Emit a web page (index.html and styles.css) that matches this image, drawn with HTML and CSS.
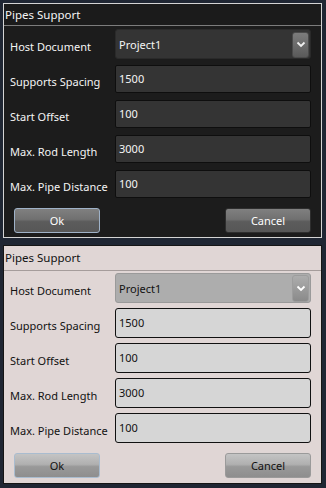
FILE: index.html
```html
<!DOCTYPE html>
<html>
<head>
<meta charset="utf-8">
<link rel="stylesheet" href="styles.css">
</head>
<body>
<div class="dialog dark">
  <div class="title">Pipes Support</div>
  <div class="form">
    <div class="row first">
      <div class="label">Host Document</div>
      <div class="combo">
        <span class="value">Project1</span>
        <span class="drop"><svg width="10" height="7" viewBox="0 0 10 7"><path d="M1.5 1.5 L5 5 L8.5 1.5" fill="none" stroke="currentColor" stroke-width="1.8"/></svg></span>
      </div>
    </div>
    <div class="row">
      <div class="label">Supports Spacing</div>
      <div class="box">1500</div>
    </div>
    <div class="row">
      <div class="label">Start Offset</div>
      <div class="box">100</div>
    </div>
    <div class="row">
      <div class="label">Max. Rod Length</div>
      <div class="box">3000</div>
    </div>
    <div class="row">
      <div class="label">Max. Pipe Distance</div>
      <div class="box">100</div>
    </div>
    <div class="buttons">
      <div class="btn ok">Ok</div>
      <div class="btn">Cancel</div>
    </div>
  </div>
</div>
<div class="dialog light">
  <div class="title">Pipes Support</div>
  <div class="form">
    <div class="row first">
      <div class="label">Host Document</div>
      <div class="combo">
        <span class="value">Project1</span>
        <span class="drop"><svg width="10" height="7" viewBox="0 0 10 7"><path d="M1.5 1.5 L5 5 L8.5 1.5" fill="none" stroke="currentColor" stroke-width="1.8"/></svg></span>
      </div>
    </div>
    <div class="row">
      <div class="label">Supports Spacing</div>
      <div class="box">1500</div>
    </div>
    <div class="row">
      <div class="label">Start Offset</div>
      <div class="box">100</div>
    </div>
    <div class="row">
      <div class="label">Max. Rod Length</div>
      <div class="box">3000</div>
    </div>
    <div class="row">
      <div class="label">Max. Pipe Distance</div>
      <div class="box">100</div>
    </div>
    <div class="buttons">
      <div class="btn ok">Ok</div>
      <div class="btn">Cancel</div>
    </div>
  </div>
</div>
</body>
</html>
```

FILE: styles.css
```css
html, body {
  margin: 0;
  padding: 0;
}
body {
  background: #1f2633;
  width: 326px;
  height: 488px;
  padding: 3px 4px 0 3px;
  box-sizing: border-box;
  display: flex;
  flex-direction: column;
  gap: 7px;
  font-family: "Noto Sans", "Open Sans", sans-serif;
  font-size: 11px;
}
.dialog {
  width: 319px;
  box-sizing: border-box;
  border: 1px solid #cfcfcf;
  display: flex;
  flex-direction: column;
}
.title {
  height: 21px;
  line-height: 21px;
  padding-left: 1px;
  font-size: 11.5px;
  border-bottom: 1px solid #7a7a7a;
}
.form {
  padding: 3px 10px 4px 6px;
  display: flex;
  flex-direction: column;
  gap: 7px;
}
.row {
  display: grid;
  grid-template-columns: 105px 1fr;
  align-items: center;
}
.row.first {
  margin-bottom: -1px;
}
.label {
  padding-top: 5px;
  white-space: nowrap;
}
.combo {
  height: 30px;
  box-sizing: border-box;
  border-radius: 3px;
  display: flex;
  align-items: center;
  justify-content: space-between;
  padding: 2px 1px 1px 2px;
}
.combo .value {
  padding-left: 1px;
}
.drop {
  width: 17px;
  height: 26px;
  box-sizing: border-box;
  border-radius: 3px;
  display: flex;
  align-items: center;
  justify-content: center;
  color: #f0f0f0;
}
.box {
  height: 28px;
  box-sizing: border-box;
  border-radius: 2px;
  padding: 0 0 1px 3px;
  display: flex;
  align-items: center;
}
.buttons {
  margin-top: 3px;
  display: flex;
  justify-content: space-between;
  padding: 0 0 0 4px;
}
.btn {
  width: 86px;
  height: 25px;
  box-sizing: border-box;
  border-radius: 3px;
  display: flex;
  align-items: center;
  justify-content: center;
  padding-bottom: 1px;
}

/* dark theme */
.dark {
  background: #1c1c1c;
  color: #f4f4f4;
  border-color: #d4d4d4;
}
.dark .title {
  background: #1b1b1b;
  border-bottom-color: #7c7c7c;
}
.dark .combo {
  background: #343434;
  border: 1px solid #2a2a2a;
}
.dark .drop {
  background: linear-gradient(#7c7c7c, #5a5a5a);
  border: 1px solid #4a4a4a;
}
.dark .box {
  background: #343434;
  border: 1px solid #0e0e0e;
}
.dark .btn {
  background: linear-gradient(#808080 0%, #707070 45%, #5c5c5c 55%, #575757 100%);
  border: 1px solid #2e2e2e;
  color: #ffffff;
}
.dark .btn.ok {
  border-color: #9fb2c8;
}

/* light theme */
.light {
  background: #e0d6d5;
  color: #111111;
  border-color: #151515;
}
.light .title {
  height: 24px;
  line-height: 24px;
  background: #e0d6d5;
  border-bottom-color: #a59c9b;
}
.light .form {
  padding: 2px 10px 5px 6px;
  gap: 5px;
}
.light .row.first {
  margin-bottom: 0;
}
.light .combo {
  background: #adadad;
  border: 1px solid #9a9a9a;
  padding: 1px 1px 1px 2px;
}
.light .drop {
  height: 27px;
  background: linear-gradient(#adadad, #8a8a8a);
  border: 1px solid #9d9d9d;
  color: #ffffff;
}
.light .box {
  height: 30px;
  background: #d6d6d6;
  border: 1px solid #111111;
  border-radius: 3px;
}
.light .buttons {
  margin-top: 5px;
}
.light .btn {
  background: linear-gradient(#c4c4c4 0%, #b0b0b0 45%, #999999 55%, #8e8e8e 100%);
  border: 1px solid #9a9a9a;
  color: #111111;
}
.light .btn.ok {
  border-color: #a9bccf;
}
```
